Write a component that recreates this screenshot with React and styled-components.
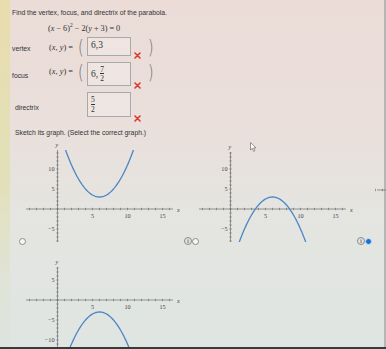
import React from "react";
import styled, { createGlobalStyle } from "styled-components";

const Global = createGlobalStyle`
  html, body {
    margin: 0;
    padding: 0;
    background: #3a3a3a;
    overflow: hidden;
  }
`;

const Frame = styled.div`
  position: relative;
  display: flex;
  width: 386px;
  height: 347px;
  overflow: hidden;
  background: linear-gradient(180deg, #ebdcd7 0%, #eadfdb 35%, #e4e5e1 65%, #dfe5e2 100%);
  box-shadow: inset -2px 0 0 #b3b7b5;
`;

const Strip = styled.div`
  flex: 0 0 10px;
  background: linear-gradient(180deg, #e9dcae 0%, #e2e0b8 50%, #e0e3d6 80%, #dde3df 100%);
`;

const Content = styled.div`
  flex: 1;
  min-width: 0;
  padding: 8px 0 0 2px;
  color: #333;
  font-family: "Liberation Sans", Arial, sans-serif;
`;

const Prompt = styled.div`
  font-size: 6.8px;
  line-height: 9px;
  white-space: nowrap;
  margin-left: ${(p) => p.$indent || 0}px;
  margin-top: ${(p) => p.$top || 0}px;
`;

const Equation = styled.div`
  margin: 7px 0 0 36px;
  font-family: "Liberation Serif", "Times New Roman", serif;
  font-size: 8.2px;
  line-height: 9px;
  white-space: nowrap;
  sup {
    font-size: 5.5px;
    line-height: 0;
  }
`;

const Rows = styled.div`
  margin-top: 4px;
  display: flex;
  flex-direction: column;
  gap: 3px;
`;

const AnswerRow = styled.div`
  display: grid;
  grid-template-columns: 37px 29px 9px 44px 17px 10px;
  height: ${(p) => p.$h}px;
  align-items: start;
`;

const Label = styled.div`
  font-size: 6.8px;
  align-self: center;
  padding-left: ${(p) => p.$pad || 0}px;
`;

const Prefix = styled.div`
  font-family: "Liberation Serif", "Times New Roman", serif;
  font-size: 8.4px;
  align-self: ${(p) => (p.$hidden ? "center" : "start")};
  margin-top: ${(p) => p.$top || 0}px;
  visibility: ${(p) => (p.$hidden ? "hidden" : "visible")};
  white-space: nowrap;
`;

const Paren = styled.div`
  font-family: "DejaVu Sans", sans-serif;
  font-size: 19px;
  line-height: 20px;
  font-weight: 200;
  color: #666;
  transform: scaleX(0.75);
  transform-origin: left center;
  visibility: ${(p) => (p.$hidden ? "hidden" : "visible")};
`;

const Box = styled.div`
  height: ${(p) => p.$h}px;
  box-sizing: border-box;
  border: 1px solid #a9a9a9;
  background: rgba(255, 255, 255, 0.22);
  display: flex;
  align-items: ${(p) => (p.$top ? "flex-start" : "center")};
  padding: ${(p) => (p.$top ? "2px 3px 0" : "0 3px")};
  gap: 2px;
  font-family: "Liberation Serif", "Times New Roman", serif;
  font-size: 9.5px;
  color: #333;
`;

const Frac = styled.span`
  display: inline-flex;
  flex-direction: column;
  align-items: center;
  font-size: 7.5px;
  line-height: 7.5px;
  span + span {
    border-top: 0.8px solid #333;
    padding-top: 1px;
  }
`;

const Mark = styled.svg`
  align-self: end;
  margin-left: 3px;
`;

const GraphGrid = styled.div`
  margin: 3px 0 0 6px;
  display: grid;
  grid-template-columns: repeat(3, 173px);
  row-gap: 11px;
  width: 519px;
`;

const Option = styled.div`
  display: flex;
  align-items: flex-end;
`;

const Radio = styled.span`
  flex: 0 0 7px;
  height: 7px;
  box-sizing: border-box;
  margin: 0 0.5px 1px;
  border-radius: 50%;
  border: ${(p) => (p.$on ? "1.5px solid #cfe0f4" : "1px solid #8c8c8c")};
  background: ${(p) => (p.$on ? "#1b6fd8" : "#f7f7f7")};
`;

const Info = styled.span`
  flex: 0 0 6px;
  height: 6px;
  margin: 0 1px 1px;
  border-radius: 50%;
  border: 0.8px solid #8a8a8a;
  font-family: "Liberation Serif", serif;
  font-weight: bold;
  font-size: 5.5px;
  line-height: 6px;
  text-align: center;
  color: #666;
`;

const Pointer = styled.svg`
  position: absolute;
  left: 250px;
  top: 142px;
`;

const W = 157;
const sx = (u) => 31.5 + 7 * u;

function Graph({ id, yMax, yMin, f, labels, bare }) {
  const sy = (v) => 10 + (yMax - v) * 4;
  const h = Math.round(sy(yMin) + 4);
  const x0 = sy(0);
  const pts = [];
  for (let u = -1; u <= 13; u += 0.1) pts.push(`${sx(u).toFixed(2)},${sy(f(u)).toFixed(2)}`);
  const xt = [];
  for (let u = -4; u <= 16; u++) xt.push(u);
  const yt = [];
  for (let v = Math.ceil(yMin); v <= Math.floor(yMax); v++) yt.push(v);
  return (
    <svg width={W} height={h} viewBox={`0 0 ${W} ${h}`} style={{ display: "block", flex: `0 0 ${W}px` }}>
      <defs>
        <clipPath id={id}>
          <rect x="0" y={sy(yMax)} width={W} height={sy(yMin) - sy(yMax)} />
        </clipPath>
      </defs>
      <g stroke="#6e6e6e" strokeWidth="0.7">
        <line x1={bare ? 5 : 0} y1={x0} x2="147" y2={x0} />
        <line x1={sx(0)} y1={sy(yMax)} x2={sx(0)} y2={sy(yMin)} />
        {xt.map((u) => (
          <line key={`x${u}`} x1={sx(u)} y1={x0 - 1.2} x2={sx(u)} y2={x0 + 1.2} />
        ))}
        {yt.map((v) => (
          <line key={`y${v}`} x1={sx(0) - 1.2} y1={sy(v)} x2={sx(0) + 1.2} y2={sy(v)} />
        ))}
      </g>
      {!bare && (
        <g fontFamily="'Liberation Serif', serif" fontSize="6.2" fill="#444">
          <text x={sx(0) - 2} y="7" fontStyle="italic">y</text>
          <text x="151" y={x0 + 2.5} fontStyle="italic">x</text>
          {[5, 10, 15].map((u) => (
            <text key={u} x={sx(u)} y={x0 + 9} textAnchor="middle">{u}</text>
          ))}
          {labels.map((v) => (
            <text key={v} x={sx(0) - 3} y={sy(v) + 2} textAnchor="end">
              {v < 0 ? `\u2212${-v}` : v}
            </text>
          ))}
        </g>
      )}
      <polyline
        clipPath={`url(#${id})`}
        points={pts.join(" ")}
        fill="none"
        stroke="#4a87c6"
        strokeWidth="1.3"
      />
    </svg>
  );
}

const Cross = () => (
  <Mark width="7" height="7" viewBox="0 0 7 7">
    <path d="M1 1 L6 6 M6 1 L1 6" stroke="#d93a2f" strokeWidth="1.6" strokeLinecap="round" />
  </Mark>
);

const graphs = [
  { id: "g1", yMax: 14.75, yMin: -8.25, f: (u) => (u - 6) ** 2 / 2 + 3, labels: [10, 5, -5], on: false, info: true },
  { id: "g2", yMax: 14.25, yMin: -8.25, f: (u) => 3 - (u - 6) ** 2 / 2, labels: [10, 5, -5], on: false, info: true },
  { id: "g3", yMax: 10, yMin: -13, f: (u) => (u - 6) ** 2 / 2 - 3, labels: [5, -5, -10], on: true, bare: true },
  { id: "g4", yMax: 8.25, yMin: -14.75, f: (u) => -3 - (u - 6) ** 2 / 2, labels: [5, -5, -10], on: false },
];

export default function App() {
  return (
    <>
      <Global />
      <Frame>
        <Strip />
        <Content>
          <Prompt>Find the vertex, focus, and directrix of the parabola.</Prompt>
          <Equation>
            (<i>x</i> − 6)<sup>2</sup> − 2(<i>y</i> + 3) = 0
          </Equation>
          <Rows>
            <AnswerRow $h={22}>
              <Label>vertex</Label>
              <Prefix $top={6}>
                (<i>x</i>, <i>y</i>) =
              </Prefix>
              <Paren>(</Paren>
              <Box $h={19} $top>6,3</Box>
              <Cross />
              <Paren>)</Paren>
            </AnswerRow>
            <AnswerRow $h={27}>
              <Label>focus</Label>
              <Prefix $top={5}>
                (<i>x</i>, <i>y</i>) =
              </Prefix>
              <Paren>(</Paren>
              <Box $h={24}>
                6,
                <Frac>
                  <span>7</span>
                  <span>2</span>
                </Frac>
              </Box>
              <Cross />
              <Paren>)</Paren>
            </AnswerRow>
            <AnswerRow $h={30}>
              <Label $pad={3}>directrix</Label>
              <Prefix $hidden>(x, y) =</Prefix>
              <Paren $hidden>(</Paren>
              <Box $h={25}>
                <Frac>
                  <span>5</span>
                  <span>2</span>
                </Frac>
              </Box>
              <Cross />
            </AnswerRow>
          </Rows>
          <Prompt $indent={3} $top={6}>
            Sketch its graph. (Select the correct graph.)
          </Prompt>
          <GraphGrid>
            {graphs.map((g) => (
              <Option key={g.id}>
                <Radio $on={g.on} />
                <Graph {...g} />
                {g.info && <Info>i</Info>}
              </Option>
            ))}
          </GraphGrid>
        </Content>
        <Pointer width="7" height="10" viewBox="0 0 7 10">
          <path d="M0.5 0.5 L0.5 8 L2.3 6.3 L3.6 9.3 L4.8 8.8 L3.6 5.9 L6 5.9 Z" fill="#fff" stroke="#555" strokeWidth="0.6" />
        </Pointer>
      </Frame>
    </>
  );
}
